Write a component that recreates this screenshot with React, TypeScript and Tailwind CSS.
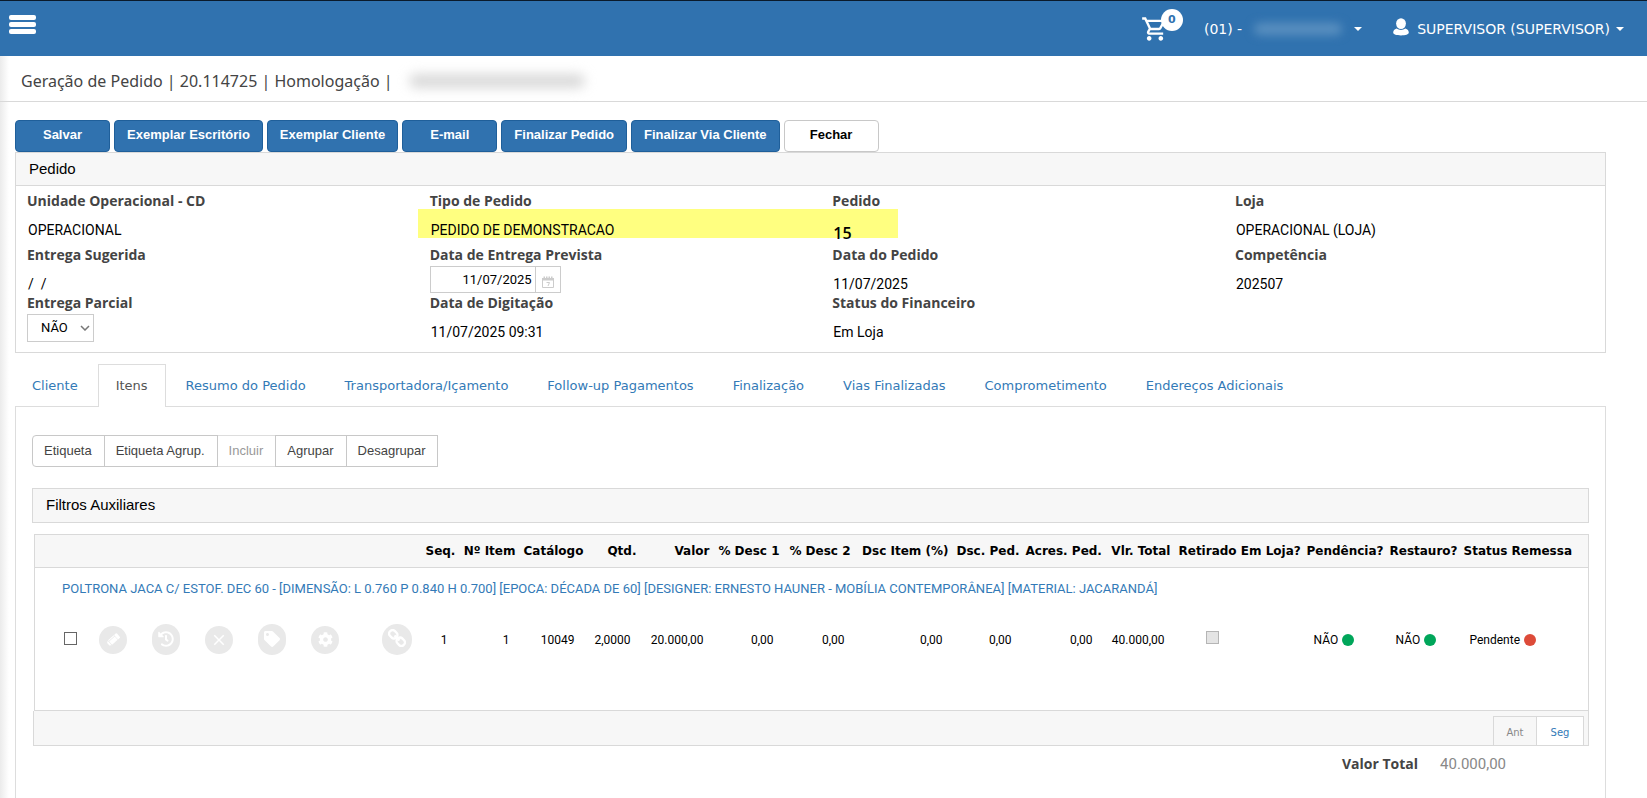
import type { ReactNode } from 'react';
import { MdClose, MdOutlineShoppingCart } from 'react-icons/md';
import { FaCog, FaHistory, FaTag } from 'react-icons/fa';

const toolbar = ['Salvar', 'Exemplar Escritório', 'Exemplar Cliente', 'E-mail', 'Finalizar Pedido', 'Finalizar Via Cliente'];

const tabs = [
  'Cliente',
  'Itens',
  'Resumo do Pedido',
  'Transportadora/Içamento',
  'Follow-up Pagamentos',
  'Finalização',
  'Vias Finalizadas',
  'Comprometimento',
  'Endereços Adicionais',
];

const columns: { title: string; width: string; align: string }[] = [
  { title: 'Seq.', width: 'w-[36px]', align: 'text-right' },
  { title: 'Nº Item', width: 'w-[62px]', align: 'text-right' },
  { title: 'Catálogo', width: 'w-[65px]', align: 'text-right' },
  { title: 'Qtd.', width: 'w-[56px]', align: 'text-right' },
  { title: 'Valor', width: 'w-[73px]', align: 'text-right' },
  { title: '% Desc 1', width: 'w-[70px]', align: 'text-right' },
  { title: '% Desc 2', width: 'w-[71px]', align: 'text-right' },
  { title: 'Dsc Item (%)', width: 'w-[98px]', align: 'text-right' },
  { title: 'Dsc. Ped.', width: 'w-[69px]', align: 'text-right' },
  { title: 'Acres. Ped.', width: 'w-[81px]', align: 'text-right' },
  { title: 'Vlr. Total', width: 'w-[72px]', align: 'text-right' },
  { title: 'Retirado Em Loja?', width: 'w-[128px]', align: 'text-left' },
  { title: 'Pendência?', width: 'w-[83px]', align: 'text-left' },
  { title: 'Restauro?', width: 'w-[74px]', align: 'text-left' },
  { title: 'Status Remessa', width: 'w-[113px]', align: 'text-left' },
];

const numbers = ['1', '1', '10049', '2,0000', '20.000,00', '0,00', '0,00', '0,00', '0,00', '0,00', '40.000,00'];

function Caret() {
  return <span className="border-x-4 border-t-4 border-x-transparent border-t-white" />;
}

function Label({ children, htmlFor }: { children: ReactNode; htmlFor?: string }) {
  const look = "block h-5 font-['Open_Sans'] text-sm leading-5 font-bold text-[#444]";
  return htmlFor ? (
    <label htmlFor={htmlFor} className={look}>{children}</label>
  ) : (
    <span className={look}>{children}</span>
  );
}

function Field({ label, children }: { label: string; children: ReactNode }) {
  return (
    <div>
      <Label>{label}</Label>
      <p className="mt-2 pl-px text-sm leading-[22px] text-black">{children}</p>
    </div>
  );
}

function RoundButton({ label, size, children }: { label: string; size: string; children: ReactNode }) {
  return (
    <button type="button" aria-label={label} className={`flex items-center justify-center rounded-full bg-[#e9e9e9] text-white ${size}`}>
      {children}
    </button>
  );
}

function Status({ text, color }: { text: string; color: string }) {
  return (
    <span className="flex items-center gap-1">
      {text}
      <span className={`size-3 rounded-full ${color}`} />
    </span>
  );
}

function TopBar() {
  return (
    <header className="flex h-14 items-center border-t border-[#0a1a2b] bg-[#3072af] pr-[23px] pl-[9px] font-['DejaVu_Sans'] text-sm text-white">
      <button type="button" aria-label="Menu" className="mb-2 flex w-[27px] flex-col gap-[2px]">
        <span className="h-[5px] rounded-[2px] bg-white" />
        <span className="h-[5px] rounded-[2px] bg-white" />
        <span className="h-[5px] rounded-[2px] bg-white" />
      </button>
      <div className="ml-auto flex items-center">
        <button type="button" aria-label="Carrinho" className="relative mr-[35px]">
          <MdOutlineShoppingCart className="size-7" />
          <span className="absolute -top-1.5 left-5 flex size-[22px] items-center justify-center rounded-full bg-white text-[11px] font-bold text-[#3072af]">0</span>
        </button>
        <button type="button" className="mr-[31px] flex items-center">
          (01) -
          <span className="flex h-[21px] w-[112px] items-center justify-center">
            <span className="h-3 w-[88px] rounded-full bg-[#5a90c0] blur-[5px]" />
          </span>
          <Caret />
        </button>
        <button type="button" className="flex items-center">
          <svg viewBox="0 0 16 18" className="mr-2 mb-1 h-[18px] w-4 fill-white">
            <ellipse cx="8" cy="5.6" rx="4.9" ry="5.4" />
            <path d="M3.6 10.6c2.4 1.9 6.4 1.9 8.8 0 2.2.7 3.4 2.2 3.4 4 0 2-3.400 2.900-7.800 2.900S.2 16.600.2 14.600c0-1.800 1.200-3.300 3.400-4z" />
          </svg>
          SUPERVISOR (SUPERVISOR)
          <span className="ml-1.5 flex">
            <Caret />
          </span>
        </button>
      </div>
    </header>
  );
}

function OrderPanel() {
  return (
    <section className="border border-[#d9d9d9] bg-white">
      <h2 className="h-[33px] border-b border-[#d9d9d9] bg-[#f7f7f7] pl-[13px] font-['Liberation_Sans'] text-[15px] leading-[31px] text-black">Pedido</h2>
      <div className="grid grid-cols-[1fr_1fr_1fr_370px] grid-rows-[54px_48px_59px] pt-[5px] pl-[11px]">
        <Field label="Unidade Operacional - CD">OPERACIONAL</Field>
        <div className="relative isolate">
          <span className="absolute top-[18px] -left-3 -z-10 h-[29px] w-[480px] bg-[#ffff80]" />
          <Field label="Tipo de Pedido">PEDIDO DE DEMONSTRACAO</Field>
        </div>
        <div className="relative">
          <Label>Pedido</Label>
          <p className="mt-[11px] pl-px font-['Open_Sans'] text-base leading-[22px] font-semibold text-black">15</p>
        </div>
        <Field label="Loja">OPERACIONAL (LOJA)</Field>

        <Field label="Entrega Sugerida">/&nbsp; /</Field>
        <div>
          <Label htmlFor="entrega-prevista">Data de Entrega Prevista</Label>
          <div className="mt-px flex h-[27px] w-[131px] border border-[#ccc]">
            <input id="entrega-prevista" defaultValue="11/07/2025" className="w-0 flex-1 pr-[3px] text-right text-[13px] text-black outline-none" />
            <button type="button" aria-label="Abrir calendário" className="flex w-[25px] items-center justify-center border-l border-[#ccc]">
              <svg viewBox="0 0 12 12" className="mt-1 size-3">
                <path d="M.5 2.500h11v9H.5z" fill="#fff" stroke="#ccc" />
                <path d="M0 2h12v2.500H0zM1.500 .5H3v2H1.500zM4 .5h1.500v2H4zM6.500 .5H8v2H6.500zM9 .5h1.500v2H9z" fill="#ccc" />
                <path d="M4.500 6.500h3l-1.500 3.500" fill="none" stroke="#ccc" />
              </svg>
            </button>
          </div>
        </div>
        <Field label="Data do Pedido">11/07/2025</Field>
        <Field label="Competência">202507</Field>

        <div>
          <Label htmlFor="entrega-parcial">Entrega Parcial</Label>
          <div className="relative mt-px h-7 w-[67px]">
            <select id="entrega-parcial" className="size-full appearance-none border border-[#ccc] bg-white pl-[13px] text-[13px] text-black">
              <option>NÃO</option>
              <option>SIM</option>
            </select>
            <svg viewBox="0 0 10 6" className="pointer-events-none absolute top-[11px] right-1 h-1.5 w-[10px] fill-none stroke-[#777] stroke-[1.500]">
              <path d="M1 1l4 4 4-4" />
            </svg>
          </div>
        </div>
        <Field label="Data de Digitação">11/07/2025 09:31</Field>
        <Field label="Status do Financeiro">Em Loja</Field>
      </div>
    </section>
  );
}

function ItemsTable() {
  return (
    <div className="ml-[2px]">
      <table className="w-full table-fixed border border-[#d9d9d9] text-xs text-black">
        <colgroup>
          <col className="w-[387px]" />
          {columns.map((c) => (
            <col key={c.title} className={c.width} />
          ))}
          <col />
        </colgroup>
        <thead>
          <tr className="h-[33px] border-b border-[#d9d9d9] bg-[#f7f7f7] font-['DejaVu_Sans'] font-bold">
            <td />
            {columns.map((c) => (
              <th key={c.title} scope="col" className={`px-1 font-bold whitespace-nowrap ${c.align}`}>{c.title}</th>
            ))}
            <td />
          </tr>
        </thead>
        <tbody>
          <tr className="h-11">
            <td colSpan={17} className="pb-[2px] pl-[27px] text-[13px]">
              <a href="#item" className="text-[#337ab7]">
                POLTRONA JACA C/ ESTOF. DEC 60 - [DIMENSÃO: L 0.760 P 0.840 H 0.700] [EPOCA: DÉCADA DE 60] [DESIGNER: ERNESTO HAUNER - MOBÍLIA CONTEMPORÂNEA] [MATERIAL: JACARANDÁ]
              </a>
            </td>
          </tr>
          <tr className="h-14">
            <td>
              <div className="flex items-center pl-[29px]">
                <input type="checkbox" aria-label="Selecionar item" className="mr-[22px] mb-[2px] size-[13px] appearance-none border border-[#666] bg-white" />
                <div className="flex items-center gap-[25px]">
                  <RoundButton label="Editar" size="size-7">
                    <svg viewBox="0 0 16 16" className="size-[15px] fill-current">
                      <g transform="rotate(-42 8 8)">
                        <path d="M.5 6.200L2.500 4.800v6.400L.5 9.800z" />
                        <path d="M3.100 4.800h8v1.100h-8zM3.100 6.500h8v4.700h-8zM11.700 4.800h2.300q1 0 1 1v4.400q0 1-1 1h-2.300z" />
                      </g>
                    </svg>
                  </RoundButton>
                  <RoundButton label="Histórico" size="h-[31px] w-7 pb-[2px]">
                    <FaHistory className="size-4" />
                  </RoundButton>
                  <RoundButton label="Excluir" size="size-7">
                    <MdClose className="size-[18px]" />
                  </RoundButton>
                  <RoundButton label="Etiqueta" size="h-[31px] w-7 pb-[2px]">
                    <FaTag className="size-4" />
                  </RoundButton>
                  <RoundButton label="Configurar" size="size-7">
                    <FaCog className="size-[15px]" />
                  </RoundButton>
                </div>
                <div className="ml-[43px]">
                  <RoundButton label="Vincular" size="h-[31px] w-[30px]">
                    <svg viewBox="0 0 18 18" className="mb-[3px] size-[18px] fill-none stroke-current stroke-[2.400]">
                      <g transform="rotate(45 9 9)">
                        <rect x="-.6" y="5.600" width="8.600" height="6.800" rx="3" />
                        <rect x="10" y="5.600" width="8.600" height="6.800" rx="3" />
                        <path d="M5.500 9h7" />
                      </g>
                    </svg>
                  </RoundButton>
                </div>
              </div>
            </td>
            {numbers.map((n, i) => (
              <td key={i} className="pr-[10px] text-right">{n}</td>
            ))}
            <td className="pl-[31px]">
              <input type="checkbox" disabled aria-label="Retirado em loja" className="mb-1 block size-[13px] appearance-none border border-[#b5b5b5] bg-[#e4e4e4]" />
            </td>
            <td className="pl-[11px]"><Status text="NÃO" color="bg-[#00a65a]" /></td>
            <td className="pl-[10px]"><Status text="NÃO" color="bg-[#00a65a]" /></td>
            <td className="pl-[10px]"><Status text="Pendente" color="bg-[#dd4b39]" /></td>
            <td />
          </tr>
          <tr className="h-[43px]">
            <td colSpan={17} />
          </tr>
        </tbody>
      </table>
      <div className="-ml-px flex h-[35px] justify-end border border-t-0 border-[#d9d9d9] bg-[#f7f7f7] pr-1 font-['DejaVu_Sans'] text-[10px]">
        <div className="mt-[5px] flex border border-b-0 border-[#d9d9d9]">
          <button type="button" disabled className="w-[43px] border-r border-[#d9d9d9] pt-[2px] text-[#888]">Ant</button>
          <button type="button" className="w-[46px] bg-white pt-[2px] text-[#337ab7]">Seg</button>
        </div>
      </div>
    </div>
  );
}

function ItemsPanel() {
  const action = 'h-8 border border-[#c8c8c8] bg-white pr-3 pb-px pl-[11px]';
  return (
    <section className="flex-1 border border-b-0 border-[#ddd] bg-white px-4 pt-7">
      <div className="flex font-['Liberation_Sans'] text-[13px] text-[#444]">
        <button type="button" className={`${action} rounded-l`}>Etiqueta</button>
        <button type="button" className={`${action} -ml-px`}>Etiqueta Agrup.</button>
        <button type="button" disabled className="h-8 border-y border-[#ddd] bg-white pr-3 pb-px pl-[11px] text-[#999]">Incluir</button>
        <button type="button" className={action}>Agrupar</button>
        <button type="button" className={`${action} -ml-px`}>Desagrupar</button>
      </div>
      <h3 className="mt-[21px] h-[35px] border border-[#d9d9d9] bg-[#f7f7f7] pl-[13px] font-['Liberation_Sans'] text-[15px] leading-8 text-black">Filtros Auxiliares</h3>
      <div className="mt-[11px]">
        <ItemsTable />
      </div>
      <dl className="flex justify-end pt-2 pr-[83px] leading-5">
        <dt className="font-['Open_Sans'] text-sm leading-5 font-bold text-[#444]">Valor Total</dt>
        <dd className="ml-[22px] text-[15px] text-[#888]">40.000,00</dd>
      </dl>
    </section>
  );
}

export default function App() {
  return (
    <div className="flex min-h-screen flex-col bg-[linear-gradient(to_right,#ebebeb,#fff_9px)] font-['Roboto',sans-serif]">
      <TopBar />
      <h1 className="flex h-[46px] items-center border-b border-[#d9d9d9] pt-1 pl-[21px] font-['Noto_Sans'] text-base whitespace-pre text-[#444]">
        Geração de Pedido | 20.114725 | Homologação |
        <span className="ml-4 h-[14px] w-[176px] rounded-full bg-[#d9d9d9] blur-[6px]" />
      </h1>
      <main className="flex flex-1 flex-col pt-[18px] pr-[41px] pl-[15px]">
        <div className="flex gap-1 font-['Liberation_Sans'] text-[13px] font-bold">
          {toolbar.map((t) => (
            <button key={t} type="button" className="h-8 min-w-[95px] rounded border border-[#1f5f9a] bg-[#3072af] px-3 pb-[3px] text-white">{t}</button>
          ))}
          <button type="button" className="h-8 min-w-[95px] rounded border border-[#c8c8c8] bg-white px-3 pb-[3px] text-black">Fechar</button>
        </div>
        <OrderPanel />
        <nav className="mt-[11px] -mb-px flex gap-px font-['DejaVu_Sans'] text-[13px]">
          {tabs.map((t) =>
            t === 'Itens' ? (
              <a key={t} href="#itens" aria-current="page" className="relative h-[43px] border border-b-0 border-[#ddd] bg-white px-[17px] leading-[41px] text-[#555]">{t}</a>
            ) : (
              <a key={t} href="#aba" className="h-[43px] px-[19px] leading-[43px] text-[#337ab7] first:pl-[17px]">{t}</a>
            ),
          )}
        </nav>
        <ItemsPanel />
      </main>
    </div>
  );
}
